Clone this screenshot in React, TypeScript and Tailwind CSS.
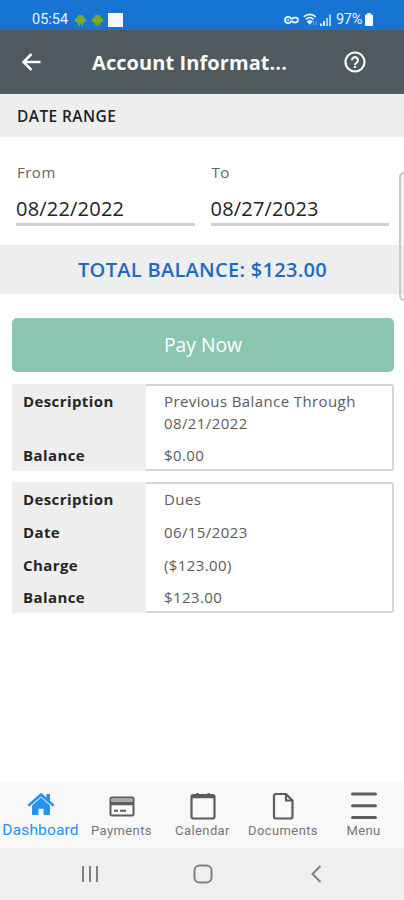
import React from 'react';

interface Row {
  label: string;
  value: string;
  tall?: boolean;
}

const transactions: Row[][] = [
  [
    { label: 'Description', value: 'Previous Balance Through 08/21/2022', tall: true },
    { label: 'Balance', value: '$0.00' },
  ],
  [
    { label: 'Description', value: 'Dues' },
    { label: 'Date', value: '06/15/2023' },
    { label: 'Charge', value: '($123.00)' },
    { label: 'Balance', value: '$123.00' },
  ],
];

const Droid = () => (
  <svg width="13" height="12" viewBox="0 0 13 12" fill="#7cab22">
    <path d="M3 4.300a3.500 3.300 0 0 1 7 0zM3 4.300h7v5H8.700v2.400H7V9.300H6v2.400H4.300V9.300H3z" />
    <rect x="1" y="4.300" width="2" height="3.800" rx=".8" />
    <rect x="10" y="4.300" width="2" height="3.800" rx=".8" />
    <path d="M4.300.4l1 1.400M8.700.4l-1 1.400" stroke="#7cab22" strokeWidth=".7" />
  </svg>
);

const StatusBar = () => (
  <div className="flex h-[30px] items-center bg-[#1874d2] pt-[9px] pl-[32px] pr-[31px] font-['Roboto',sans-serif] text-[14.500px] text-[#eaf3ff]">
    <span className="w-[38px] whitespace-nowrap">05:54</span>
    <div className="ml-[4px] flex items-center gap-[4px]">
      <Droid />
      <Droid />
    </div>
    <div className="ml-[4px] h-[14px] w-[15px] bg-[#f5f9ff]" />
    <div className="ml-auto flex items-center">
      <svg width="15" height="10" viewBox="0 0 15 10" fill="none" stroke="currentColor" strokeWidth="1.800">
        <path d="M7 3.600C6 1.200 1 1 1 5s5 3.800 6 1.500h1.500c.8 1.500 5.500 1.500 5.500-1.500s-4.700-2.800-5.500-1.400z" />
        <path d="M3.300 5h1.800" />
      </svg>
      <svg className="ml-[4px]" width="15" height="13" viewBox="0 0 15 13" fill="none" stroke="currentColor" strokeWidth="1.700">
        <path d="M.8 3.800c3.500-3.200 8.600-3.200 12 0M3 6.300c2.300-2 5.400-2 7.600 0M5 8.600c1.200-1 2.500-1 3.600 0L6.800 10.600z" />
        <path d="M10.600 8.200v4M13.200 8.200v4" strokeWidth="1" opacity=".4" />
      </svg>
      <svg className="ml-[2px]" width="12" height="12" viewBox="0 0 12 12" fill="currentColor">
        <path d="M0 9.500h2V12H0zM3 7h2v5H3z" opacity=".9" />
        <path d="M6 4h2v8H6zM9 .5h2V12H9z" opacity=".7" />
      </svg>
      <span className="ml-[4px] w-[28px] whitespace-nowrap tracking-[-0.300px]">97%</span>
      <svg className="ml-[1px]" width="8" height="13" viewBox="0 0 9 13" preserveAspectRatio="none" fill="#fff">
        <path d="M2.500 0h4v1.500H8a1 1 0 0 1 1 1V12a1 1 0 0 1-1 1H1a1 1 0 0 1-1-1V2.500a1 1 0 0 1 1-1h1.500z" />
      </svg>
    </div>
  </div>
);

const Header = () => (
  <header className="flex h-[64px] items-center bg-[#4e5a5e] pl-[21px] pr-[38px] text-[#fafcfc]">
    <svg width="21" height="20" viewBox="0 0 21 20" fill="none" stroke="currentColor" strokeWidth="2.500">
      <path d="M19.500 10H2.500M10.500 2L2.500 10l8 8" />
    </svg>
    <h1 className="ml-[50px] pt-px text-[20px] font-bold tracking-[0.080px] whitespace-nowrap">Account Informat...</h1>
    <svg className="ml-auto" width="22" height="22" viewBox="0 0 22 22" fill="none" stroke="currentColor" strokeWidth="2.200">
      <circle cx="11" cy="11" r="9.500" />
      <path d="M8 9.200a3 3 0 1 1 4.700 2.400c-1.200.8-1.700 1.200-1.700 2.300M11 15v2" />
    </svg>
  </header>
);

const DateField = ({ label, value }: { label: string; value: string }) => (
  <div className="flex-1">
    <div className="h-[22px] pl-px text-[15px] leading-[22px] tracking-[0.500px] text-[#666]">{label}</div>
    <div className="mt-[9px] h-[34px] border-b-[3px] border-[#d0d0d0] text-[20px] leading-[33px] tracking-[0.200px] text-[#222]">{value}</div>
  </div>
);

const TransactionCard = ({ rows }: { rows: Row[] }) => (
  <div className="mr-[10px] ml-[12px] flex">
    <div className="w-[134px] bg-[#eeeeee] pt-[6px] pb-[5px] pl-[11px] text-[15px] font-bold tracking-[0.400px] text-[#262626]">
      {rows.map((row) => (
        <div key={row.label} className={`leading-[22px] not-last:mb-[10.700px] ${row.tall ? 'h-[43px]' : 'h-[22px]'}`}>{row.label}</div>
      ))}
    </div>
    <div className="flex-1 rounded-r-[3px] border-y-2 border-r-2 border-[#d6d6d6] pt-[5px] pb-[2px] pl-[18px] text-[15px] tracking-[0.400px] text-[#5c5c5c]">
      {rows.map((row) => (
        <div key={row.label} className={`leading-[21.500px] not-last:mb-[10.700px] ${row.tall ? 'h-[43px]' : 'h-[22px]'}`}>{row.value}</div>
      ))}
    </div>
  </div>
);

const tabs = [
  {
    name: 'Dashboard',
    width: 'w-[81px]',
    icon: (
      <svg width="28" height="28" viewBox="0 0 28 28" fill="#2492f0">
        <path d="M14 .8l5.500 4.800V2H23v6.800l4.500 4-1.600 2L14 4.500 2.100 14.800.5 12.800z" />
        <path d="M14 5.600l9 7.800V23h-6.500v-6.300h-5V23H5v-9.600z" />
      </svg>
    ),
  },
  {
    name: 'Payments',
    width: 'w-[81px]',
    icon: (
      <svg width="28" height="28" viewBox="0 0 28 28" fill="none" stroke="#5c5c5c" strokeWidth="2">
        <rect x="2.500" y="5.500" width="23" height="18" rx="1.500" />
        <path d="M2.500 11.500h23" strokeWidth="3.500" />
        <path d="M3.500 8.200h21" stroke="#a5a5a5" strokeWidth="3" />
        <path d="M6 18.700h4M12 18.700h6" />
      </svg>
    ),
  },
  {
    name: 'Calendar',
    width: 'w-[81px]',
    icon: (
      <svg width="28" height="28" viewBox="0 0 28 28" fill="none" stroke="#5c5c5c" strokeWidth="2.200">
        <rect x="2.500" y="3" width="23" height="23.500" rx="2" />
        <path d="M2.500 4.500h23" strokeWidth="3.500" />
        <path d="M8.500 1v3M19.500 1v3" />
      </svg>
    ),
  },
  {
    name: 'Documents',
    width: 'w-[80px]',
    icon: (
      <svg width="28" height="28" viewBox="0 0 28 28" fill="none" stroke="#5c5c5c" strokeWidth="2.200">
        <path d="M17 2H7a2 2 0 0 0-2 2v20.500a2 2 0 0 0 2 2h14.500a2 2 0 0 0 2-2V8.500zM17 2v6.500h6.500" />
      </svg>
    ),
  },
  {
    name: 'Menu',
    width: 'w-[81px]',
    icon: (
      <svg width="28" height="28" viewBox="0 0 28 28" fill="none" stroke="#5c5c5c" strokeWidth="3" strokeLinecap="round">
        <path d="M2.500 2h23M2.500 13.700h23M2.500 25.400h23" />
      </svg>
    ),
  },
];

const TabBar = () => (
  <nav className="flex h-[66px] bg-[#f8f8f8] pt-[10px] font-['Roboto',sans-serif]">
    {tabs.map((tab) => (
      <div key={tab.name} className={`flex shrink-0 flex-col items-center ${tab.width}`}>
        {tab.icon}
        <span
          className={`whitespace-nowrap leading-[20px] ${
            tab.name === 'Dashboard' ? 'text-[15.500px] tracking-[0.150px] text-[#2492f0]' : 'mt-px text-[13px] tracking-[0.400px] text-[#777]'
          }`}
        >
          {tab.name}
        </span>
      </div>
    ))}
  </nav>
);

const SystemNav = () => (
  <div className="flex h-[52px] items-center bg-[#f0f0f0] pl-[81px] pr-[82px] text-[#808080]">
    <svg width="18" height="18" viewBox="0 0 18 18" fill="none" stroke="currentColor" strokeWidth="2">
      <path d="M2 1v16M9 1v16M16 1v16" />
    </svg>
    <svg className="mr-auto ml-[94px]" width="20" height="20" viewBox="0 0 20 20" fill="none" stroke="currentColor" strokeWidth="2">
      <rect x="1.500" y="1.500" width="17" height="17" rx="5" />
    </svg>
    <svg width="12" height="18" viewBox="0 0 12 18" fill="none" stroke="currentColor" strokeWidth="2">
      <path d="M10.500 1L2.500 9l8 8" />
    </svg>
  </div>
);

const App: React.FC = () => {
  return (
    <div className="relative flex h-[900px] w-[404px] flex-col overflow-hidden bg-white font-['Open_Sans',sans-serif]">
      <StatusBar />
      <Header />
      <div className="h-[43px] bg-[#eeeeee] pl-[17px] text-[15.500px] leading-[44px] font-semibold tracking-[0.400px] text-[#222]">DATE RANGE</div>
      <div className="flex h-[108px] gap-[16px] pt-[24px] pr-[15px] pl-[16px]">
        <DateField label="From" value="08/22/2022" />
        <DateField label="To" value="08/27/2023" />
      </div>
      <div className="h-[49px] bg-[#eeeeee] pl-px text-center text-[20px] leading-[50px] font-semibold tracking-[0.300px] text-[#1b6ac9]">
        TOTAL BALANCE: $123.00
      </div>
      <button className="mr-[10px] ml-[12px] mt-[24px] h-[54px] shrink-0 rounded-[5px] bg-[#8bc6b1] pt-px text-[19.300px] text-white">Pay Now</button>
      <div className="mt-[12px] flex flex-col gap-[11.500px]">
        {transactions.map((rows, i) => (
          <TransactionCard key={i} rows={rows} />
        ))}
      </div>
      <div className="flex-1" />
      <TabBar />
      <SystemNav />
      {/* edge panel handle */}
      <div className="absolute top-[172px] right-[-6px] h-[129px] w-[11px] rounded-[5px] border-2 border-[#c9c9c9] bg-[#e8e8e8]/50" />
    </div>
  );
};

export default App;
